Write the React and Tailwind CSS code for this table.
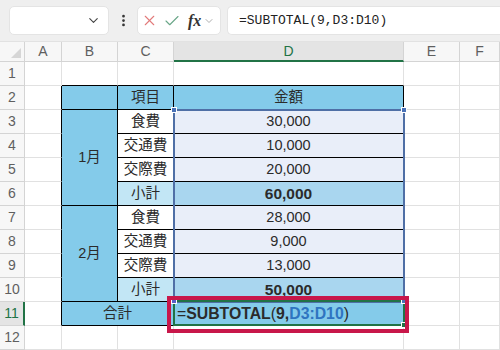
import React from 'react';
import { ChevronDown, EllipsisVertical, X, Check } from 'lucide-react';

const font = "font-['Liberation_Sans','Noto_Sans_CJK_JP',sans-serif]";

// plain sheet cell / table cell borders
const g = 'border-r border-b border-[#e1e1e1]';
const t = 'border-r border-b border-black flex items-center justify-center text-[14.5px] text-[#2b2b2b]';
const aCol = 'border-r border-b border-r-black border-b-[#e1e1e1]';
const top = 'border-r border-b border-r-[#e1e1e1] border-b-black';

const blue = 'bg-[#84cbea]';
const light = 'bg-[#c2e6f5]';
const lav = 'bg-[#e9eef9]';
const sub = 'bg-[#a9d6ef]';

const RowHead = ({ n, active }) => (
  <div
    className={
      active
        ? 'flex items-center justify-center text-[14px] text-[#217346] bg-[#e4e4e4] border-b border-[#d4d4d4] border-r-2 border-r-[#217346]'
        : 'flex items-center justify-center text-[14px] text-[#5f5f5f] bg-[#f7f7f7] border-r border-b border-[#d4d4d4]'
    }
  >
    {n}
  </div>
);

const Month = ({ label, rows }) => (
  <>
    {rows.map((r, i) => (
      <React.Fragment key={r.n}>
        <RowHead n={r.n} />
        <div className={aCol} />
        {i === 0 && <div className={`${t} ${blue} row-span-4`}>{label}</div>}
        <div className={`${t} ${r.total ? light : 'bg-white'}`}>{r.item}</div>
        <div className={`${t} ${r.total ? sub + ' font-bold text-[15.5px]' : lav}`}>{r.amount}</div>
        <div className={g} />
        <div className={g} />
      </React.Fragment>
    ))}
  </>
);

export default function App() {
  return (
    <div className={`${font} relative w-[500px] h-[350px] overflow-hidden bg-white flex flex-col`}>
      {/* formula bar */}
      <div className="h-[42px] bg-[#efefef] flex items-start pt-[6px] pl-[9px] gap-[6px] border-b border-[#e2e2e2]">
        <div className="w-[100px] h-[29px] bg-white rounded-[5px] border border-[#e4e4e4] flex items-center justify-end pr-[7px]">
          <ChevronDown size={15} strokeWidth={1.8} className="text-[#444]" />
        </div>
        <div className="w-[16px] h-[29px] flex items-center justify-center">
          <EllipsisVertical size={15} strokeWidth={2.4} className="text-[#333]" />
        </div>
        <div className="w-[84px] h-[29px] bg-white rounded-[5px] border border-[#e4e4e4] flex items-center pl-[3px]">
          <X size={17} strokeWidth={1.5} className="text-[#e27a7a]" />
          <Check size={18} strokeWidth={1.5} className="text-[#6aa788] ml-[5px]" />
          <span className="ml-[7px] font-['Liberation_Serif',serif] italic font-bold text-[16px] text-[#333] leading-none">fx</span>
          <ChevronDown size={12} strokeWidth={1.6} className="text-[#999] ml-[2px]" />
        </div>
        <div className="flex-1 h-[29px] bg-white rounded-l-[5px] border border-r-0 border-[#e4e4e4] flex items-center pl-[11px] font-['Liberation_Mono',monospace] text-[13px] text-[#222]">
          =SUBTOTAL(9,D3:D10)
        </div>
      </div>

      {/* sheet */}
      <div className="grid grid-cols-[25px_37px_56px_56px_230px_56px_40px] grid-rows-[20px_repeat(12,24px)]">
        <div className="relative bg-[#f7f7f7] border-r border-b border-[#d4d4d4]">
          <div className="absolute right-[3px] bottom-[3px] w-0 h-0 border-l-[10px] border-l-transparent border-b-[10px] border-b-[#d6d6d6]" />
        </div>
        {['A', 'B', 'C'].map((c) => (
          <div key={c} className="flex items-center justify-center bg-[#f7f7f7] border-r border-b border-[#d4d4d4] text-[14px] text-[#5f5f5f]">
            {c}
          </div>
        ))}
        <div className="flex items-center justify-center bg-[#e4e4e4] border-r border-[#d4d4d4] border-b-2 border-b-[#217346] text-[14px] text-[#217346]">
          D
        </div>
        {['E', 'F'].map((c) => (
          <div key={c} className="flex items-center justify-center bg-[#f7f7f7] border-r border-b border-[#d4d4d4] text-[14px] text-[#5f5f5f]">
            {c}
          </div>
        ))}

        {/* row 1 */}
        <RowHead n={1} />
        <div className={g} />
        <div className={top} />
        <div className={top} />
        <div className={top} />
        <div className={g} />
        <div className={g} />

        {/* row 2 */}
        <RowHead n={2} />
        <div className={aCol} />
        <div className={`${t} ${blue}`} />
        <div className={`${t} ${blue}`}>項目</div>
        <div className={`${t} ${blue}`}>金額</div>
        <div className={g} />
        <div className={g} />

        <Month
          label="1月"
          rows={[
            { n: 3, item: '食費', amount: '30,000' },
            { n: 4, item: '交通費', amount: '10,000' },
            { n: 5, item: '交際費', amount: '20,000' },
            { n: 6, item: '小計', amount: '60,000', total: true },
          ]}
        />
        <Month
          label="2月"
          rows={[
            { n: 7, item: '食費', amount: '28,000' },
            { n: 8, item: '交通費', amount: '9,000' },
            { n: 9, item: '交際費', amount: '13,000' },
            { n: 10, item: '小計', amount: '50,000', total: true },
          ]}
        />

        {/* row 11 */}
        <RowHead n={11} active />
        <div className={aCol} />
        <div className={`${t} ${blue} col-span-2`}>合計</div>
        <div className={`${t} ${blue} !justify-start pl-[3px] text-[15.8px] text-[#1c2b3c]`}>
          <span>=</span>
          <span className="font-bold">SUBTOTAL</span>
          <span>(</span>
          <span className="font-bold">9,</span>
          <span className="font-bold text-[#2f74c0]">D3:D10</span>
          <span>)</span>
        </div>
        <div className={g} />
        <div className={g} />

        {/* row 12 */}
        <RowHead n={12} />
        <div className={g} />
        <div className={g} />
        <div className={g} />
        <div className={g} />
        <div className={g} />
        <div className={g} />
      </div>

      {/* referenced range D3:D10 */}
      <div className="absolute left-[173px] top-[109px] w-[232px] h-[194px] border-2 border-[#4f6fa6]" />
      <div className="absolute left-[171px] top-[107px] w-[6px] h-[6px] bg-[#4a72b8] border border-white" />
      <div className="absolute left-[401px] top-[107px] w-[6px] h-[6px] bg-[#4a72b8] border border-white" />

      {/* active cell D11 */}
      <div className="absolute left-[173px] top-[300px] w-[232px] h-[26px] border-2 border-[#217346]" />
      <div className="absolute left-[171px] top-[298px] w-[6px] h-[6px] bg-[#5a5fc8] border border-white" />
      <div className="absolute left-[401px] top-[298px] w-[6px] h-[6px] bg-[#4a72b8] border border-white" />
      <div className="absolute left-[401px] top-[322px] w-[6px] h-[6px] bg-[#217346] border border-white" />

      {/* highlight box */}
      <div className="absolute left-[167px] top-[296px] w-[242px] h-[37px] border-4 border-[#c8174a]" />
    </div>
  );
}
